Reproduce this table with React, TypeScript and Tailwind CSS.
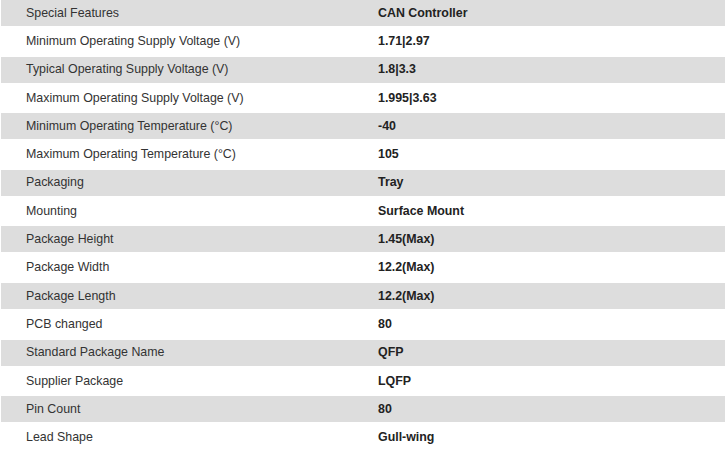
const specs: [string, string][] = [
  ['Special Features', 'CAN Controller'],
  ['Minimum Operating Supply Voltage (V)', '1.71|2.97'],
  ['Typical Operating Supply Voltage (V)', '1.8|3.3'],
  ['Maximum Operating Supply Voltage (V)', '1.995|3.63'],
  ['Minimum Operating Temperature (°C)', '-40'],
  ['Maximum Operating Temperature (°C)', '105'],
  ['Packaging', 'Tray'],
  ['Mounting', 'Surface Mount'],
  ['Package Height', '1.45(Max)'],
  ['Package Width', '12.2(Max)'],
  ['Package Length', '12.2(Max)'],
  ['PCB changed', '80'],
  ['Standard Package Name', 'QFP'],
  ['Supplier Package', 'LQFP'],
  ['Pin Count', '80'],
  ['Lead Shape', 'Gull-wing'],
]

export default function App() {
  return (
    <div className="w-[726px] h-[451px] overflow-hidden bg-white px-[1px] font-['Liberation_Sans',Arial,sans-serif] text-[12.4px]">
      <div className="flex flex-col gap-[2.3px]">
        {specs.map(([label, value], i) => (
          <div
            key={label}
            className={`grid grid-cols-[352px_1fr] h-[26px] items-center ${i % 2 === 0 ? 'bg-[#dddddd]' : 'bg-white'}`}
          >
            <span className="pl-[25px] text-[#333333]">{label}</span>
            <span className="pl-[25px] font-bold text-[#222222]">{value}</span>
          </div>
        ))}
      </div>
    </div>
  )
}
